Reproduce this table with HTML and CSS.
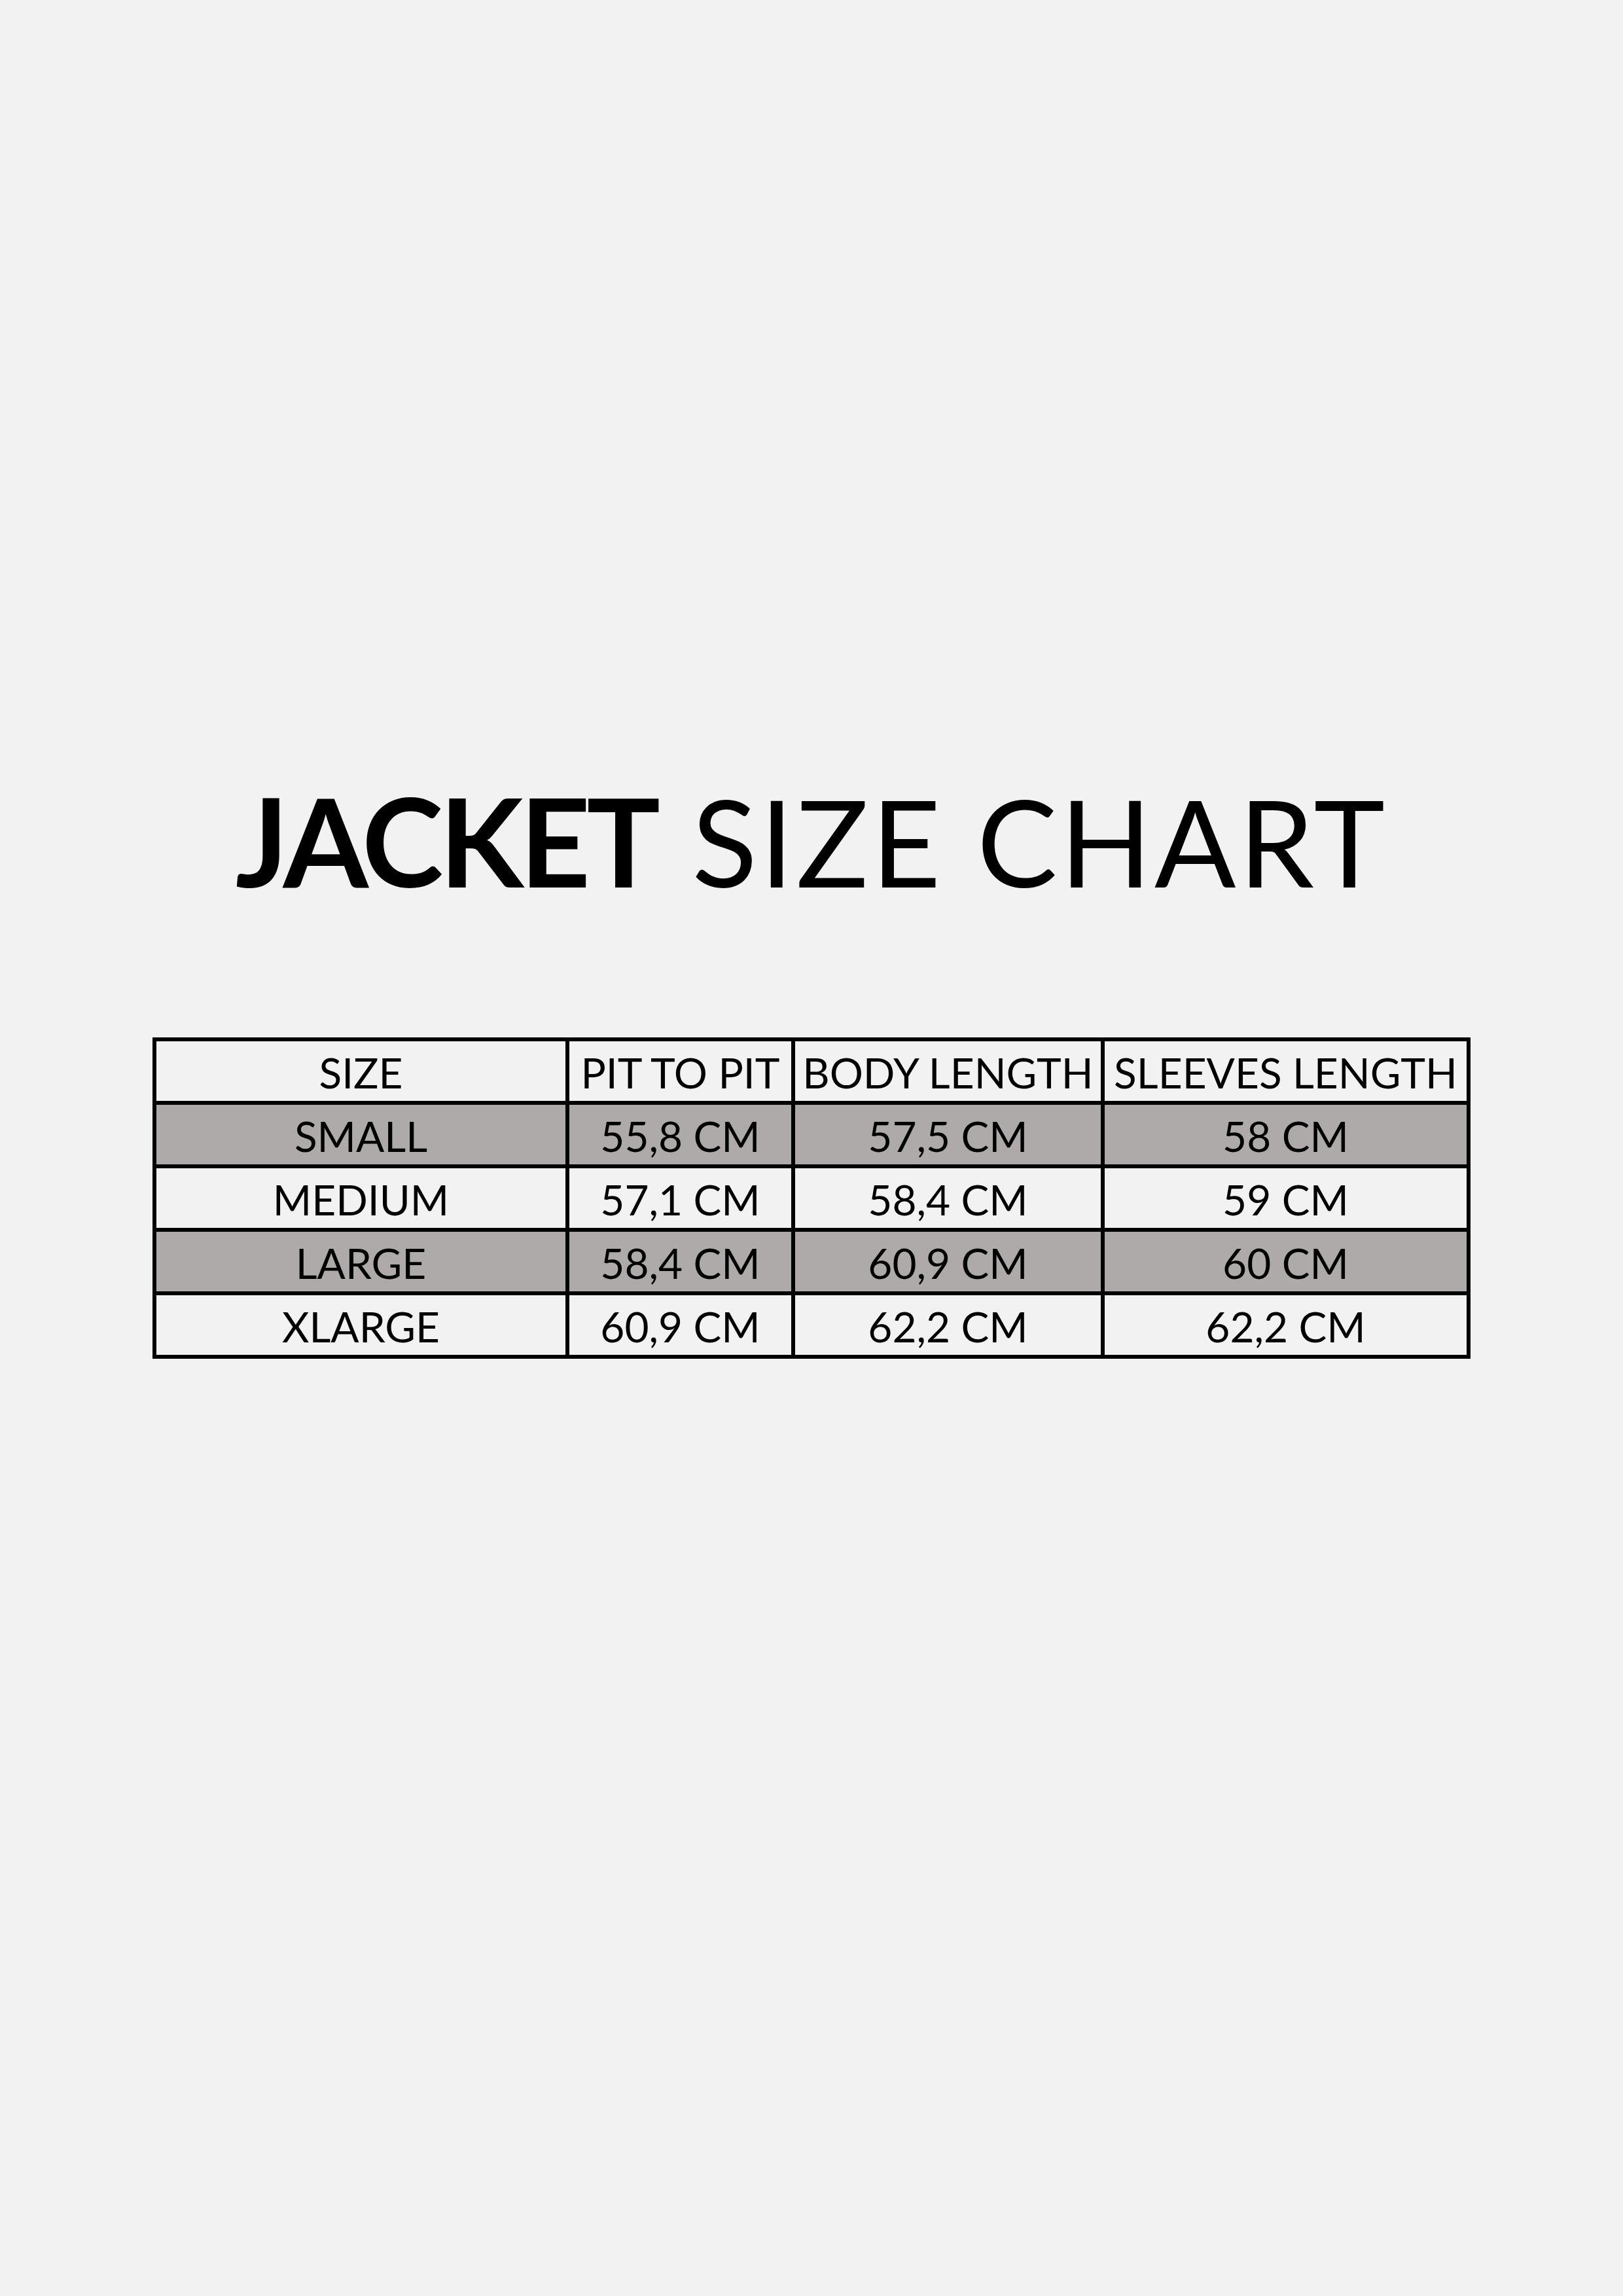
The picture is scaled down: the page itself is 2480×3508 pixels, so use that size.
FILE: index.html
```html
<!DOCTYPE html>
<html lang="en">
<head>
<meta charset="utf-8">
<title>Jacket Size Chart</title>
<link rel="stylesheet" href="styles.css">
</head>
<body>
<main class="page">
  <h1 class="title"><span class="title-bold">JACKET</span> <span class="title-light">SIZE CHART</span></h1>
  <div class="chart">
    <div class="cell">SIZE</div>
    <div class="cell">PIT TO PIT</div>
    <div class="cell">BODY LENGTH</div>
    <div class="cell">SLEEVES LENGTH</div>

    <div class="cell shaded">SMALL</div>
    <div class="cell shaded">55,8 CM</div>
    <div class="cell shaded">57,5 CM</div>
    <div class="cell shaded">58 CM</div>

    <div class="cell">MEDIUM</div>
    <div class="cell">57,1 CM</div>
    <div class="cell">58,4 CM</div>
    <div class="cell">59 CM</div>

    <div class="cell shaded">LARGE</div>
    <div class="cell shaded">58,4 CM</div>
    <div class="cell shaded">60,9 CM</div>
    <div class="cell shaded">60 CM</div>

    <div class="cell">XLARGE</div>
    <div class="cell">60,9 CM</div>
    <div class="cell">62,2 CM</div>
    <div class="cell">62,2 CM</div>
  </div>
</main>
</body>
</html>
```
FILE: styles.css
```css
html, body {
  margin: 0;
  padding: 0;
  background: #f2f2f2;
}
.page {
  width: 2480px;
  height: 3508px;
  display: flex;
  flex-direction: column;
  align-items: center;
  padding-top: 1189px;
  box-sizing: border-box;
}
.title {
  margin: 0;
  font-family: Lato, "Liberation Sans", sans-serif;
  font-size: 184px;
  line-height: 188px;
  height: 188px;
  color: #000;
  white-space: nowrap;
  font-weight: normal;
  word-spacing: 7px;
}
.title-bold {
  font-size: 188px;
  font-weight: 700;
  letter-spacing: -6px;
  word-spacing: 0;
}
.title-light {
  font-size: 184px;
  font-weight: 400;
  letter-spacing: 4px;
  word-spacing: 0;
}
.chart {
  margin-top: 208px;
  display: grid;
  grid-template-columns: 625px 339px 467px 553px;
  grid-auto-rows: 91px;
  gap: 6px;
  padding: 6px;
  background: #000;
}
.cell {
  background: #f2f2f2;
  font-family: Lato, "Liberation Sans", sans-serif;
  font-size: 64px;
  line-height: 87px;
  padding-top: 4px;
  text-align: center;
  color: #000;
  white-space: nowrap;
}
.cell.shaded {
  background: #aeaaaa;
}
```
